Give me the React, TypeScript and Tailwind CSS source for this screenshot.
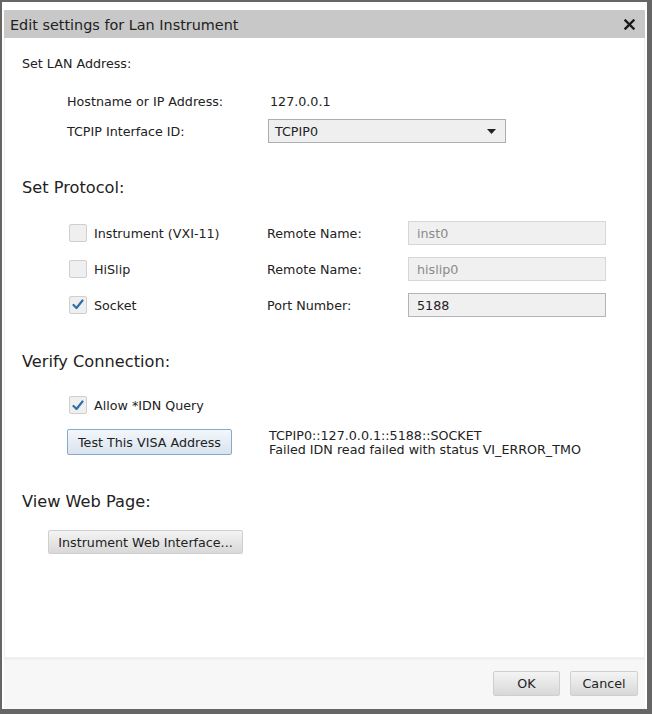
import type { ReactNode } from 'react'

const font = { fontFamily: '"DejaVu Sans", Verdana, sans-serif' }

function Check({ checked }: { checked?: boolean }) {
  return (
    <span className="flex h-[18px] w-[18px] flex-shrink-0 items-center justify-center rounded-[2px] border border-[#cfcfcf] bg-[#efefef]">
      {checked && (
        <svg width="12" height="11" viewBox="0 0 12 11">
          <path d="M1.5 6 L4.5 9 L10.5 1.5" fill="none" stroke="#2f6fa8" strokeWidth="2.2" strokeLinecap="round" strokeLinejoin="round" />
        </svg>
      )}
    </span>
  )
}

function Heading({ children, className }: { children: ReactNode; className: string }) {
  return <div className={`flex h-[22px] items-center pt-[1px] text-[16.2px] text-[#222] ${className}`}>{children}</div>
}

function ProtocolRow({
  label,
  field,
  value,
  checked,
  enabled,
  className,
}: {
  label: string
  field: string
  value: string
  checked?: boolean
  enabled?: boolean
  className: string
}) {
  return (
    <div className={`ml-[45px] flex h-[24px] items-center ${className}`}>
      <div className="flex w-[200px] items-center gap-[7px] pl-[2px]">
        <Check checked={checked} />
        <span className="pt-[1px]">{label}</span>
      </div>
      <span className="w-[141px] pt-[1px]">{field}</span>
      <div
        className={`flex h-[24px] w-[198px] items-center border bg-[#f0f0f0] px-[8px] pt-[1px] ${
          enabled ? 'border-[#b4b4b4] text-[#222]' : 'border-[#d6d6d6] text-[#8a8a8a]'
        }`}
      >
        {value}
      </div>
    </div>
  )
}

const grayBtn =
  'flex items-center justify-center rounded-[2px] border border-[#cfcfcf] bg-gradient-to-b from-[#f4f4f4] to-[#d8d8d8] pt-[1px] text-[#222]'

export default function App() {
  return (
    <div style={font} className="h-[714px] w-[652px] bg-[#666] pb-[5px] pl-[2px] pr-[5px] pt-[2px] text-[12.7px] text-[#222]">
      <div className="flex h-full flex-col bg-white px-[2px] pt-[8px]">
        {/* Title bar */}
        <div className="flex h-[28px] flex-shrink-0 items-center justify-between bg-[#c8c8c8] pl-[6px] pr-[10px] pt-[3px]">
          <span className="text-[14.4px] text-[#222]">Edit settings for Lan Instrument</span>
          <svg width="11" height="11" viewBox="0 0 11 11" className="-mt-[2px]">
            <path d="M1.5 1.5 L9.5 9.5 M9.5 1.5 L1.5 9.5" stroke="#1a1a1a" strokeWidth="2.4" strokeLinecap="square" />
          </svg>
        </div>

        {/* Body */}
        <div className="flex flex-1 flex-col border-x border-[#f0f0f0] pl-[17px]">
          <div className="mt-[17px] flex h-[16px] items-center pt-[1px]">Set LAN Address:</div>

          <div className="ml-[45px] mt-[18px] flex h-[24px] items-center pt-[1px]">
            <span className="w-[201px]">Hostname or IP Address:</span>
            <span className="pl-[2px]">127.0.0.1</span>
          </div>
          <div className="ml-[45px] mt-[6px] flex h-[24px] items-center">
            <span className="w-[201px] pt-[1px]">TCPIP Interface ID:</span>
            <div className="flex h-[24px] w-[238px] items-center justify-between border border-[#adadad] bg-[#efefef] pl-[6px] pr-[9px]">
              <span className="pt-[1px]">TCPIP0</span>
              <svg width="9" height="5" viewBox="0 0 9 5">
                <path d="M0 0 H9 L4.5 5 Z" fill="#222" />
              </svg>
            </div>
          </div>

          <Heading className="mt-[34px]">Set Protocol:</Heading>
          <ProtocolRow className="mt-[22px]" label="Instrument (VXI-11)" field="Remote Name:" value="inst0" />
          <ProtocolRow className="mt-[12px]" label="HiSlip" field="Remote Name:" value="hislip0" />
          <ProtocolRow className="mt-[12px]" label="Socket" field="Port Number:" value="5188" checked enabled />

          <Heading className="mt-[34px]">Verify Connection:</Heading>
          <div className="ml-[47px] mt-[20px] flex h-[24px] items-center gap-[7px]">
            <Check checked />
            <span className="pt-[1px]">Allow *IDN Query</span>
          </div>
          <div className="ml-[45px] mt-[12px] flex h-[26px] items-start">
            <button className="flex h-[26px] w-[165px] items-center justify-center rounded-[2px] border border-[#86a9cf] bg-gradient-to-b from-[#f3f7fb] to-[#d9e3ee] pt-[1px] text-[#222]">
              Test This VISA Address
            </button>
            <div className="ml-[37px] leading-[14px]">
              <div>TCPIP0::127.0.0.1::5188::SOCKET</div>
              <div>Failed IDN read failed with status VI_ERROR_TMO</div>
            </div>
          </div>

          <Heading className="mt-[36px]">View Web Page:</Heading>
          <button className={`ml-[26px] mt-[17px] h-[24px] w-[195px] ${grayBtn}`}>Instrument Web Interface...</button>
        </div>

        {/* Footer */}
        <div className="flex h-[52px] flex-shrink-0 items-start justify-end gap-[10px] border-t-[3px] border-[#efefef] bg-[#f7f7f7] pr-[7px] pt-[11px]">
          <button className={`h-[25px] w-[67px] ${grayBtn}`}>OK</button>
          <button className={`h-[25px] w-[68px] ${grayBtn}`}>Cancel</button>
        </div>
      </div>
    </div>
  )
}
